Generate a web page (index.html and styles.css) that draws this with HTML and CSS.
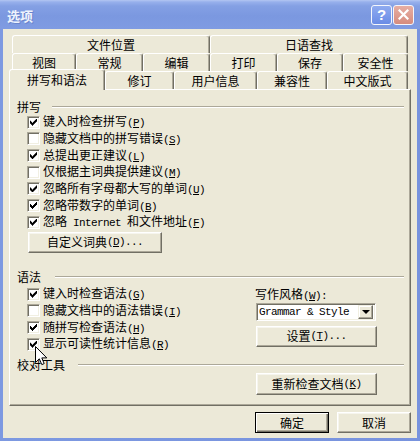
FILE: index.html
```html
<!DOCTYPE html>
<html lang="zh-CN">
<head>
<meta charset="utf-8">
<title>选项</title>
<link rel="stylesheet" href="styles.css">
</head>
<body>
<div class="window">
  <div class="titlebar">
    <span class="title">选项</span>
    <div class="caption">
      <span class="cbtn help">?</span>
      <span class="cbtn close"><svg width="11" height="11" viewBox="0 0 11 11"><path d="M1.5 1.5L9.5 9.5M9.5 1.5L1.5 9.5" stroke="#fff" stroke-width="2.2" stroke-linecap="square"/></svg></span>
    </div>
  </div>
  <div class="client">
    <div class="tabrow r1">
      <div class="tab" style="width:198px">文件位置</div>
      <div class="tab" style="width:198px">日语查找</div>
    </div>
    <div class="tabrow r2">
      <div class="tab" style="width:64px">视图</div>
      <div class="tab" style="width:67px">常规</div>
      <div class="tab" style="width:67px">编辑</div>
      <div class="tab" style="width:67px">打印</div>
      <div class="tab" style="width:66px">保存</div>
      <div class="tab" style="width:65px">安全性</div>
    </div>
    <div class="tabrow r3">
      <div class="tab sel" style="width:96px">拼写和语法</div>
      <div class="tab" style="width:69px">修订</div>
      <div class="tab" style="width:83px">用户信息</div>
      <div class="tab" style="width:70px">兼容性</div>
      <div class="tab" style="width:81px">中文版式</div>
    </div>
    <div class="panel">
      <div class="ghead"><span>拼写</span><i class="rule r-a"></i></div>
      <div class="checks">
        <div class="cb"><span class="box on"></span><span>键入时检查拼写<span class="m">(<u>P</u>)</span></span></div>
        <div class="cb"><span class="box"></span><span>隐藏文档中的拼写错误<span class="m">(<u>S</u>)</span></span></div>
        <div class="cb"><span class="box on"></span><span>总提出更正建议<span class="m">(<u>L</u>)</span></span></div>
        <div class="cb"><span class="box"></span><span>仅根据主词典提供建议<span class="m">(<u>M</u>)</span></span></div>
        <div class="cb"><span class="box on"></span><span>忽略所有字母都大写的单词<span class="m">(<u>U</u>)</span></span></div>
        <div class="cb"><span class="box on"></span><span>忽略带数字的单词<span class="m">(<u>B</u>)</span></span></div>
        <div class="cb"><span class="box on"></span><span>忽略<span class="m"> Internet </span>和文件地址<span class="m">(<u>F</u>)</span></span></div>
      </div>
      <div class="btn dict">自定义词典<span class="m">(<u>D</u>)...</span></div>
      <div class="ghead g2"><span>语法</span><i class="rule r-b"></i></div>
      <div class="grammar">
        <div class="checks gl">
          <div class="cb"><span class="box on"></span><span>键入时检查语法<span class="m">(<u>G</u>)</span></span></div>
          <div class="cb"><span class="box"></span><span>隐藏文档中的语法错误<span class="m">(<u>I</u>)</span></span></div>
          <div class="cb"><span class="box on"></span><span>随拼写检查语法<span class="m">(<u>H</u>)</span></span></div>
          <div class="cb"><span class="box on"></span><span>显示可读性统计信息<span class="m">(<u>R</u>)</span></span></div>
        </div>
        <div class="gr">
          <div class="style-label">写作风格<span class="m">(<u>W</u>):</span></div>
          <div class="select"><span class="sel-text m">Grammar &amp; Style</span><span class="dd"><i class="tri"></i></span></div>
          <div class="btn setup">设置<span class="m">(<u>T</u>)...</span></div>
        </div>
      </div>
      <div class="ghead g3"><span>校对工具</span><i class="rule r-c"></i></div>
      <div class="btn recheck">重新检查文档<span class="m">(<u>K</u>)</span></div>
    </div>
    <div class="footer">
      <div class="btn dlg default">确定</div>
      <div class="btn dlg">取消</div>
    </div>
  </div>
</div>
<svg class="cursor" width="13" height="21" viewBox="0 0 13 21"><path d="M0.5 0.5V16.5L4.3 12.8L6.8 18.6L9.2 17.6L6.8 11.9H11.8Z" fill="#fff" stroke="#000" stroke-width="1" stroke-linejoin="miter"/></svg>
</body>
</html>
```

FILE: styles.css
```css
* { box-sizing: border-box; }
html, body { margin: 0; padding: 0; }
body {
  width: 420px;
  height: 441px;
  overflow: hidden;
  position: relative;
  font-family: "Noto Sans CJK SC", "Noto Sans", sans-serif;
  font-size: 12px;
  color: #000;
  background: #7b97e0;
}
.window {
  width: 420px;
  height: 441px;
  display: flex;
  flex-direction: column;
  background: linear-gradient(to right, #7d99e1, #7893de);
}
.titlebar {
  height: 29px;
  flex: none;
  display: flex;
  align-items: center;
  justify-content: space-between;
  padding: 0 6px 0 7px;
  background: linear-gradient(#b3c6f2 0, #97b0ec 2px, #84a0e4 6px, #7b98e0 55%, #7f9be2 100%);
}
.title {
  color: #eef3fd;
  font-weight: bold;
  font-size: 13px;
  line-height: 16px;
  margin-top: 2px;
  text-shadow: 1px 1px 0 #6a84cc;
}
.caption { display: flex; gap: 1px; }
.cbtn {
  width: 21px;
  height: 20px;
  border: 1px solid #f4f6fc;
  border-radius: 3px;
  display: flex;
  align-items: center;
  justify-content: center;
}
.help {
  background: linear-gradient(#8fabf0, #6a8ce6);
  color: #fff;
  font-family: "Liberation Sans", Arial, sans-serif;
  font-weight: bold;
  font-size: 15px;
  line-height: 1;
}
.close { background: linear-gradient(#e7aea3, #d68c7e); }

.client {
  flex: 1;
  margin: 0 3px 3px 3px;
  background: #ece9d8;
  padding-top: 6px;
}
.tabrow { display: flex; height: 18px; }
.r1, .r2 { margin-left: 9px; }
.r3 {
  margin-left: 6px;
  margin-top: -2px;
  height: 20px;
  align-items: flex-end;
  position: relative;
  z-index: 1;
}
.tab {
  height: 18px;
  flex: none;
  display: flex;
  align-items: center;
  justify-content: center;
  line-height: 14px;
  background: #ece9d8;
  border-top: 1px solid #fff;
  border-left: 1px solid #fff;
  border-right: 1px solid #716f64;
  box-shadow: inset -1px 0 #aca899;
  border-radius: 3px 3px 0 0;
}
.tab.sel {
  height: 21px;
  margin-bottom: -1px;
  padding-bottom: 1px;
}

.panel {
  margin-left: 6px;
  width: 402px;
  height: 317px;
  background: #ece9d8;
  border-top: 1px solid #fff;
  border-left: 1px solid #fff;
  border-right: 1px solid #716f64;
  border-bottom: 1px solid #716f64;
  box-shadow: inset -1px -1px #aca899;
  padding: 10px 6px 0 7px;
}
.ghead {
  display: flex;
  align-items: center;
  height: 14px;
  line-height: 14px;
}
.rule {
  flex: 1;
  height: 2px;
  border-top: 1px solid #aca899;
  border-bottom: 1px solid #fff;
  margin-left: 11px;
}
.r-b { margin-left: 14px; }
.r-c { margin-left: 13px; }
.g2 { margin-top: 17px; }
.g3 { margin-top: 5px; }

.checks { margin-left: 10px; }
.cb {
  height: 16.67px;
  display: flex;
  align-items: center;
  line-height: 14px;
  white-space: nowrap;
}
.box {
  width: 13px;
  height: 13px;
  flex: none;
  margin-right: 3px;
  background: #fff;
  border: 1px solid;
  border-color: #aca899 #fff #fff #aca899;
  box-shadow: inset 1px 1px #716f64, inset -1px -1px #f1efe2;
  display: flex;
  align-items: center;
  justify-content: center;
}
.box.on::after {
  content: "";
  width: 7px;
  height: 7px;
  background: #000;
  clip-path: polygon(0px 2px, 1px 2px, 1px 3px, 2px 3px, 2px 4px, 3px 4px, 3px 3px, 4px 3px, 4px 2px, 5px 2px, 5px 1px, 6px 1px, 6px 0px, 7px 0px, 7px 3px, 6px 3px, 6px 4px, 5px 4px, 5px 5px, 4px 5px, 4px 6px, 3px 6px, 3px 7px, 2px 7px, 2px 6px, 1px 6px, 1px 5px, 0px 5px);
}
.m {
  font-family: "Liberation Mono", "DejaVu Sans Mono", monospace;
  font-size: 11px;
  letter-spacing: -0.6px;
  white-space: pre;
}
u { text-decoration: underline; text-underline-offset: 1px; }

.btn {
  height: 21px;
  display: flex;
  align-items: center;
  justify-content: center;
  line-height: 14px;
  white-space: nowrap;
  background: #ece9d8;
  border: 1px solid;
  border-color: #fff #716f64 #716f64 #fff;
  box-shadow: inset -1px -1px #aca899, inset 1px 1px #f6f5ee;
}
.dict { width: 134px; margin-left: 11px; margin-top: 1.33px; }

.grammar { display: flex; margin-top: 2px; }
.gl { width: 229px; flex: none; }
.gr { display: flex; flex-direction: column; }
.style-label { height: 15px; line-height: 15px; margin-left: -1px; white-space: nowrap; }
.select {
  width: 120px;
  height: 18px;
  margin-top: 2px;
  display: flex;
  align-items: center;
  padding: 2px;
  background: #fff;
  border: 1px solid;
  border-color: #aca899 #fff #fff #aca899;
  box-shadow: inset 1px 1px #716f64, inset -1px -1px #f1efe2;
}
.sel-text { flex: 1; line-height: 14px; }
.dd {
  width: 15px;
  height: 14px;
  flex: none;
  display: flex;
  align-items: center;
  justify-content: center;
  background: #ece9d8;
  border: 1px solid;
  border-color: #f1efe2 #716f64 #716f64 #f1efe2;
  box-shadow: inset -1px -1px #aca899, inset 1px 1px #fff;
}
.tri {
  width: 0;
  height: 0;
  border-left: 4px solid transparent;
  border-right: 4px solid transparent;
  border-top: 4px solid #000;
  margin-top: 1px;
}
.setup { width: 121px; margin-top: 5px; }
.recheck { width: 121px; height: 22px; margin-left: 239px; margin-top: 1px; }

.footer {
  display: flex;
  justify-content: flex-end;
  gap: 8px;
  margin-top: 6px;
  padding-right: 6px;
}
.dlg { width: 74px; }
.default {
  border: 1px solid #000;
  box-shadow: inset 1px 1px #fff, inset -1px -1px #716f64, inset -2px -2px #aca899;
}
.cursor {
  position: absolute;
  left: 35px;
  top: 346px;
}
```
